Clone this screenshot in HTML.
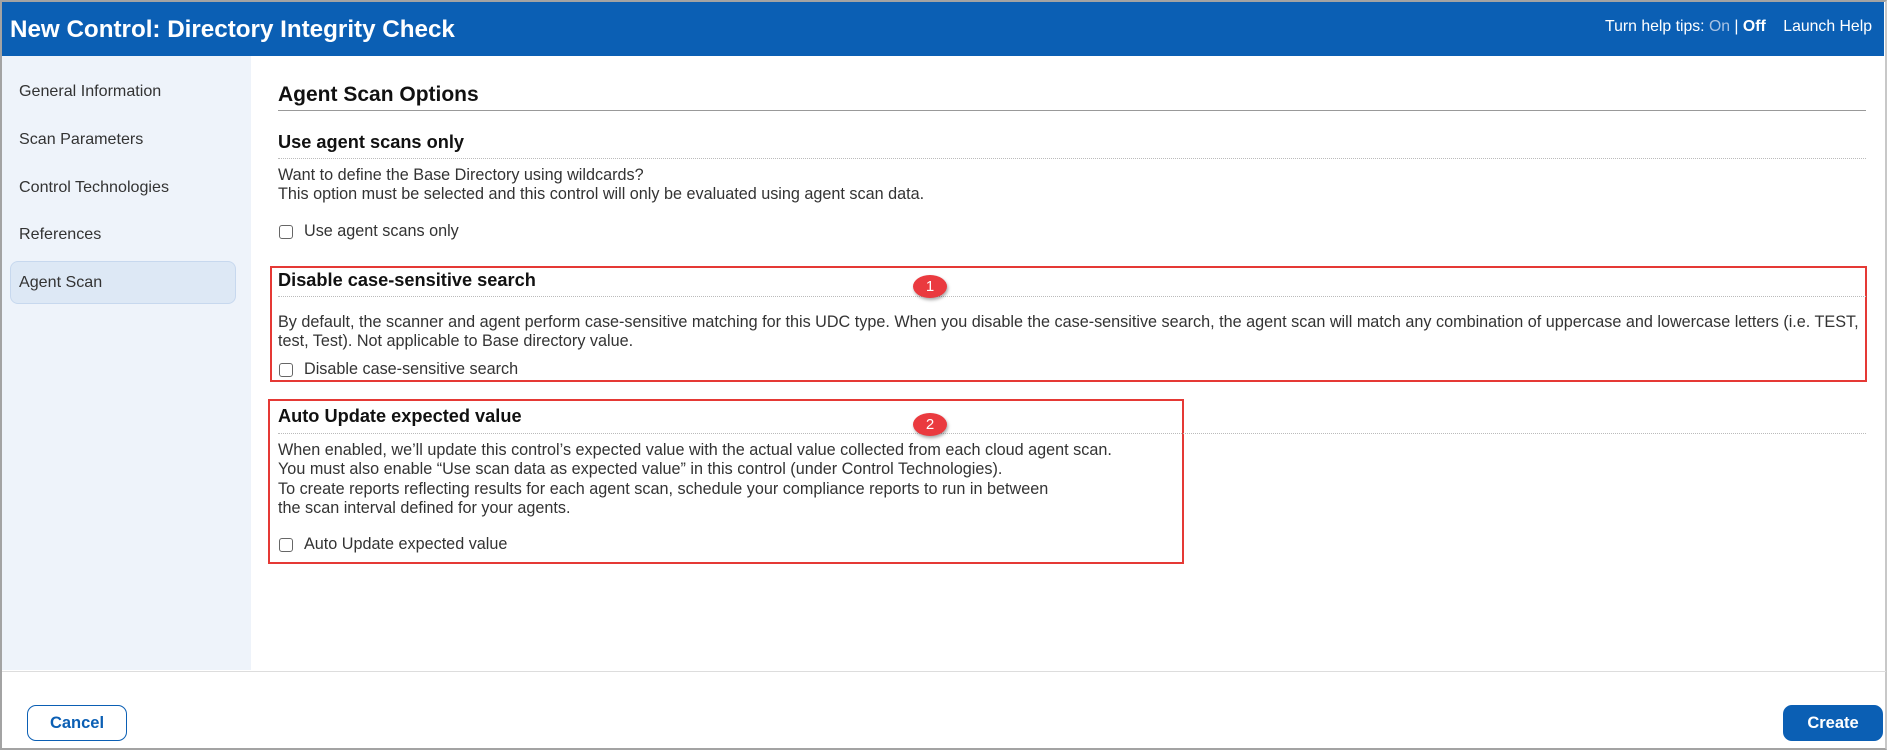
<!DOCTYPE html>
<html><head><meta charset="utf-8"><style>
*{box-sizing:border-box;margin:0;padding:0}
body{width:1890px;height:750px;background:#fff;font-family:"Liberation Sans",Arial,sans-serif;position:relative;overflow:hidden;color:#222}
.frame{position:absolute;left:0;top:0;width:1887px;height:750px;border:2px solid #a3a3a3;border-right:2px solid #c8c8c8}
.hdr{position:absolute;left:2px;top:2px;width:1882px;height:54px;background:#0b5fb4;color:#fff}
.hdr h1{position:absolute;left:8px;top:14px;font-size:24.2px;font-weight:bold;letter-spacing:0}
.tips{position:absolute;right:12px;top:16px;font-size:15.8px}
.side{position:absolute;left:2px;top:56px;width:249px;height:614px;background:#eef3fa}
.side div{position:absolute;left:17px;font-size:16.1px;color:#333}
.side .sel{position:absolute;left:8px;top:205px;width:226px;height:43px;background:#dde8f5;border:1px solid #c7d8ee;border-radius:8px}
.abs{position:absolute}
.h2{font-size:21px;font-weight:bold;color:#111}
.h3{font-size:18.2px;font-weight:bold;color:#111}
.t{font-size:16.2px;color:#333;line-height:19.3px}
.dot{position:absolute;height:0;border-top:1px dotted #bbb}
.cb{position:absolute;width:14px;height:14px;border:1.5px solid #666;border-radius:3px;background:#fff}
.red{position:absolute;border:2px solid #e53935}
.badge{position:absolute;width:34px;height:23px;border-radius:50%;background:#ea3a3f;color:#fff;font-size:15px;text-align:center;line-height:23px;box-shadow:1px 2px 3px rgba(0,0,0,.35)}
.btn{position:absolute;top:705px;width:100px;height:36px;border-radius:9px;font-size:16.5px;font-weight:bold;text-align:center;line-height:34px}
</style></head><body>
<div class="frame"></div>
<div class="hdr"><h1>New Control: Directory Integrity Check</h1>
<div class="tips">Turn help tips: <span style="color:#a9c3e3">On</span> | <b>Off</b> &nbsp;&nbsp;&nbsp;Launch Help</div></div>
<div class="side">
<div class="sel"></div>
<div style="top:26px">General Information</div>
<div style="top:74px">Scan Parameters</div>
<div style="top:122px">Control Technologies</div>
<div style="top:169px">References</div>
<div style="top:217px">Agent Scan</div>
</div>
<div class="abs h2" style="left:278px;top:83px">Agent Scan Options</div>
<div class="abs" style="left:278px;top:110px;width:1588px;border-top:1.5px solid #999"></div>

<div class="abs h3" style="left:278px;top:132px">Use agent scans only</div>
<div class="dot" style="left:278px;top:158px;width:1588px"></div>
<div class="abs t" style="left:278px;top:166px">Want to define the Base Directory using wildcards?<br>This option must be selected and this control will only be evaluated using agent scan data.</div>
<div class="cb" style="left:279px;top:225px"></div>
<div class="abs t" style="left:304px;top:222px">Use agent scans only</div>

<div class="red" style="left:270px;top:266px;width:1597px;height:116px"></div>
<div class="abs h3" style="left:278px;top:270px">Disable case-sensitive search</div>
<div class="dot" style="left:278px;top:296px;width:1588px"></div>
<div class="badge" style="left:913px;top:275px">1</div>
<div class="abs t" style="left:278px;top:313px;white-space:nowrap">By default, the scanner and agent perform case-sensitive matching for this UDC type. When you disable the case-sensitive search, the agent scan will match any combination of uppercase and lowercase letters (i.e. TEST,<br>test, Test). Not applicable to Base directory value.</div>
<div class="cb" style="left:279px;top:363px"></div>
<div class="abs t" style="left:304px;top:360px">Disable case-sensitive search</div>

<div class="red" style="left:268px;top:399px;width:916px;height:165px"></div>
<div class="abs h3" style="left:278px;top:406px">Auto Update expected value</div>
<div class="dot" style="left:278px;top:433px;width:1588px"></div>
<div class="badge" style="left:913px;top:413px">2</div>
<div class="abs t" style="left:278px;top:441px">When enabled, we’ll update this control’s expected value with the actual value collected from each cloud agent scan.<br>You must also enable “Use scan data as expected value” in this control (under Control Technologies).<br>To create reports reflecting results for each agent scan, schedule your compliance reports to run in between<br>the scan interval defined for your agents.</div>
<div class="cb" style="left:279px;top:538px"></div>
<div class="abs t" style="left:304px;top:535px">Auto Update expected value</div>

<div class="abs" style="left:2px;top:671px;width:1884px;border-top:1px solid #ddd"></div>
<div class="btn" style="left:27px;border:1.5px solid #0b5fb4;color:#0b5fb4;background:#fff">Cancel</div>
<div class="btn" style="left:1783px;background:#0b5fb4;color:#fff;border:1px solid #0b5fb4">Create</div>
</body></html>
